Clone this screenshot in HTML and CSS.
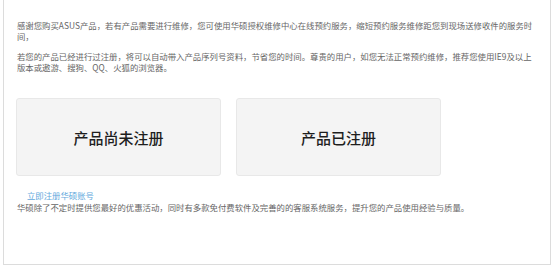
FILE: index.html
```html
<!DOCTYPE html>
<html lang="zh-CN">
<head>
    <meta charset="UTF-8">
    <meta name="viewport" content="width=device-width, initial-scale=1.0">
    <title>预约维修</title>
    <link rel="stylesheet" href="styles.css">
</head>
<body>
    <div class="panel">
        <p class="intro">感谢您购买ASUS产品，若有产品需要进行维修，您可使用华硕授权维修中心在线预约服务，缩短预约服务维修距您到现场送修收件的服务时间，</p>
        <p class="intro">若您的产品已经进行过注册，将可以自动带入产品序列号资料，节省您的时间。尊贵的用户，如您无法正常预约维修，推荐您使用IE9及以上版本或遨游、搜狗、QQ、火狐的浏览器。</p>

        <!-- 选择产品状态 -->
        <div class="choices">
            <div class="choice">产品尚未注册</div>
            <div class="choice">产品已注册</div>
        </div>

        <a class="register-link" href="#">立即注册华硕账号</a>
        <p class="note">华硕除了不定时提供您最好的优惠活动，同时有多款免付费软件及完善的的客服系统服务，提升您的产品使用经验与质量。</p>
    </div>
</body>
</html>
```

FILE: styles.css
```css
/* General */
body {
    margin: 0;
    padding: 0;
    background: #fff;
    font-family: "Noto Sans CJK SC", "Liberation Sans", sans-serif;
}

/* Contenedor */
.panel {
    margin: 0 3px 0 3px;
    height: 265px;
    box-sizing: border-box;
    border: 1px solid #dcdcdc;
    border-top: none;
    padding: 20px 12px 0 12px;
}

.intro {
    margin: 0 0 9px 1px;
    font-size: 8.4px;
    line-height: 11px;
    color: #666;
    padding-right: 5px;
}

/* Opciones */
.choices {
    display: flex;
    gap: 15px;
    margin-top: 25px;
}

.choice {
    width: 205px;
    height: 78px;
    box-sizing: border-box;
    background-color: #f4f4f4;
    border: 1px solid #e8e8e8;
    border-radius: 3px;
    display: flex;
    justify-content: center;
    align-items: center;
    font-size: 15px;
    font-weight: 500;
    color: #1e1e1e;
}

.register-link {
    display: block;
    margin: 13px 0 0 11px;
    font-size: 8.4px;
    line-height: 12px;
    color: #62a8dc;
    text-decoration: none;
}

.note {
    margin: 0 0 0 1px;
    font-size: 8.4px;
    line-height: 12px;
    color: #666;
}
```
